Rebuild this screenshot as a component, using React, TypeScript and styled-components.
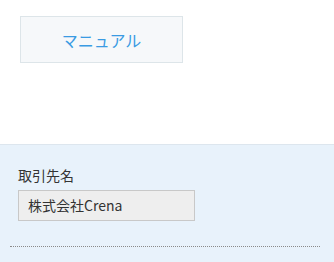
import styled, { createGlobalStyle } from "styled-components";

const GlobalStyle = createGlobalStyle`
  html, body {
    margin: 0;
    padding: 0;
    background: #ffffff;
    font-family: "Noto Sans CJK JP", "Noto Sans", sans-serif;
  }
`;

const Page = styled.div`
  width: 334px;
  height: 262px;
  overflow: hidden;
  display: flex;
  flex-direction: column;
`;

const Top = styled.div`
  height: 144px;
  padding: 16px 0 0 20px;
  box-sizing: border-box;
`;

const ManualButton = styled.button`
  width: 163px;
  height: 47px;
  border: 1px solid #dde5e9;
  background: #f6f8fa;
  color: #3a9be3;
  font-family: "Noto Sans CJK JP", sans-serif;
  font-size: 16px;
  padding: 0;
  cursor: pointer;
`;

const Panel = styled.section`
  flex: 1;
  background: #e8f2fb;
  border-top: 1px solid #dde6ee;
  padding: 19px 14px 0 10px;
  box-sizing: border-box;
`;

const Field = styled.div`
  padding-left: 8px;
  display: flex;
  flex-direction: column;
  gap: 4px;
`;

const Label = styled.label`
  font-size: 14px;
  color: #333333;
  line-height: 22px;
`;

const ReadonlyInput = styled.div`
  width: 177px;
  height: 31px;
  box-sizing: border-box;
  border: 1px solid #c8c8c8;
  background: #eeeeee;
  color: #333333;
  font-size: 14px;
  line-height: 29px;
  padding-left: 9px;
`;

const Divider = styled.hr`
  margin: 25px 0 0 0;
  border: none;
  border-top: 1px dotted #8a8a8a;
  width: 310px;
`;

export default function App() {
  return (
    <>
      <GlobalStyle />
      <Page>
        <Top>
          <ManualButton>マニュアル</ManualButton>
        </Top>
        <Panel>
          <Field>
            <Label>取引先名</Label>
            <ReadonlyInput>株式会社Crena</ReadonlyInput>
          </Field>
          <Divider />
        </Panel>
      </Page>
    </>
  );
}
